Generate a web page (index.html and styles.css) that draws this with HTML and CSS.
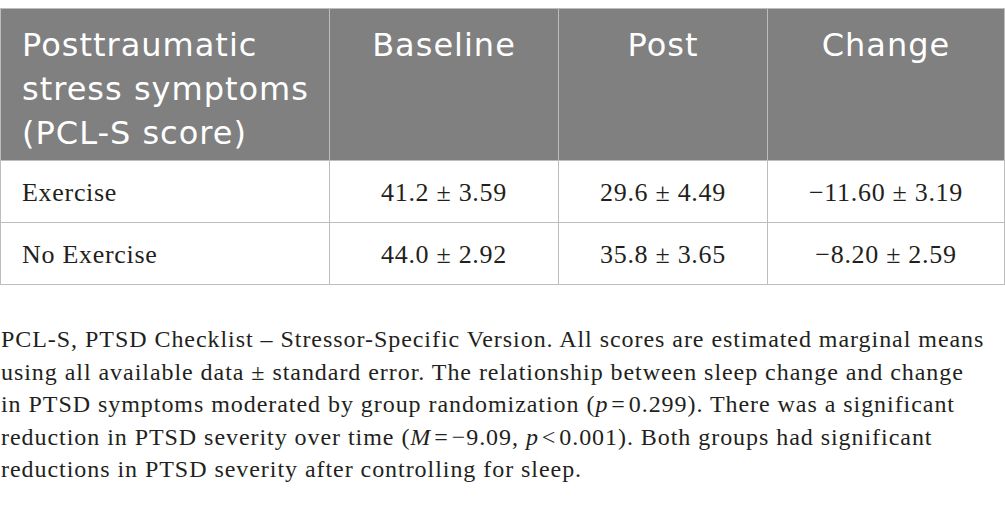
FILE: index.html
```html
<!DOCTYPE html>
<html lang="en">
<head>
  <meta charset="UTF-8" />
  <title>PCL-S scores</title>
  <link rel="stylesheet" href="styles.css">
</head>
<body>
  <div class="wrap">
    <table class="scores">
      <thead>
        <tr>
          <th class="first">Posttraumatic stress symptoms (PCL-S score)</th>
          <th>Baseline</th>
          <th>Post</th>
          <th>Change</th>
        </tr>
      </thead>
      <tbody>
        <tr>
          <td class="first">Exercise</td>
          <td>41.2 ± 3.59</td>
          <td>29.6 ± 4.49</td>
          <td>−11.60 ± 3.19</td>
        </tr>
        <tr>
          <td class="first">No Exercise</td>
          <td>44.0 ± 2.92</td>
          <td>35.8 ± 3.65</td>
          <td>−8.20 ± 2.59</td>
        </tr>
      </tbody>
    </table>

    <p class="note">PCL-S, PTSD Checklist – Stressor-Specific Version. All scores are estimated marginal means<br>
    using all available data ± standard error. The relationship between sleep change and change<br>
    in PTSD symptoms moderated by group randomization (<i>p</i>&#8202;=&#8202;0.299). There was a significant<br>
    reduction in PTSD severity over time (<i>M</i>&#8202;=&#8202;−9.09, <i>p</i>&#8202;&lt;&#8202;0.001). Both groups had significant<br>
    reductions in PTSD severity after controlling for sleep.</p>
  </div>
</body>
</html>
```

FILE: styles.css
```css
body, html {
  margin: 0;
  padding: 0;
  background: #fff;
}

.wrap {
  padding-top: 8px;
}

.scores {
  width: 1005px;
  border-collapse: collapse;
  table-layout: fixed;
}

.scores th, .scores td {
  border: 1px solid #bdbdbd;
}

.scores th {
  background-color: #7f807f;
  color: #fff;
  font-family: 'DejaVu Sans', sans-serif;
  font-weight: 400;
  font-size: 32px;
  letter-spacing: 1px;
  line-height: 44px;
  height: 152px;
  vertical-align: top;
  padding: 14px 10px 0;
  box-sizing: border-box;
  text-align: center;
}

.scores th:nth-child(1) { width: 329px; }
.scores th:nth-child(2) { width: 229px; }
.scores th:nth-child(3) { width: 209px; }

.scores th.first {
  text-align: left;
  padding-left: 21px;
}

.scores td {
  font-family: 'Liberation Serif', serif;
  font-size: 26px;
  letter-spacing: 0.7px;
  color: #231f20;
  height: 62px;
  text-align: center;
  padding: 2px 10px 0;
  box-sizing: border-box;
}

.scores td.first {
  text-align: left;
  padding-left: 21px;
}

.note {
  margin: 38px 0 0;
  padding-left: 1px;
  font-family: 'Liberation Serif', serif;
  font-size: 24px;
  letter-spacing: 0.95px;
  line-height: 32.5px;
  color: #231f20;
  white-space: nowrap;
}
```
